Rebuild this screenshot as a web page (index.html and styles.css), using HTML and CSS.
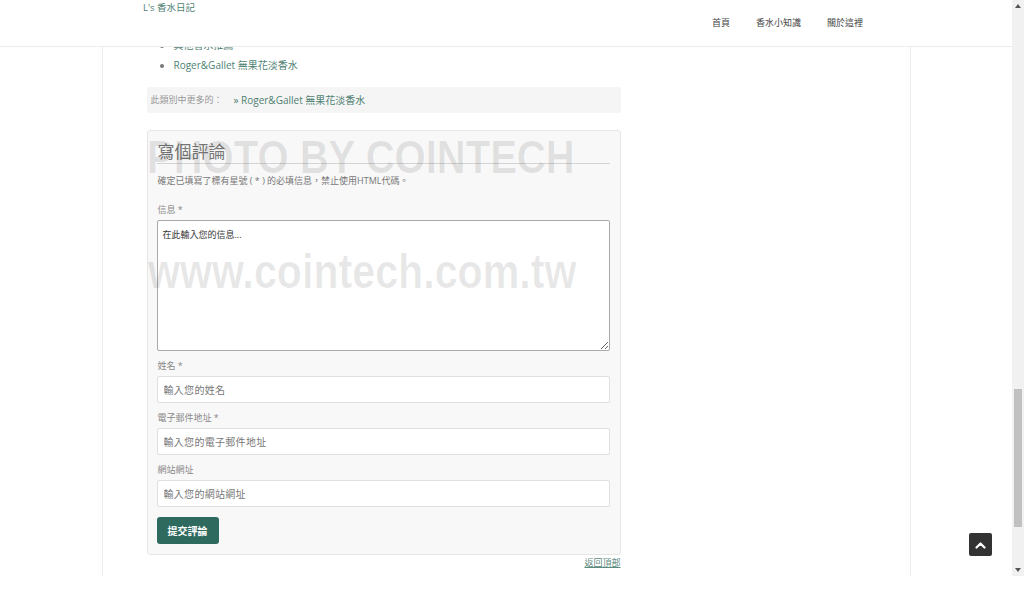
FILE: index.html
```html
<!DOCTYPE html>
<html lang="zh-Hant">
<head>
<meta charset="utf-8">
<title>L's 香水日記</title>
<link rel="stylesheet" href="styles.css">
</head>
<body>
<div class="viewport">
  <div class="page">
    <div class="container">
      <main class="main">
        <ul class="related">
          <li><a href="#">其他香水推薦</a></li>
          <li><a href="#">Roger&amp;Gallet 無果花淡香水</a></li>
        </ul>
        <div class="more">
          <span class="more-label">此類別中更多的：</span>
          <a href="#">» Roger&amp;Gallet 無果花淡香水</a>
        </div>
        <form class="comment-box">
          <h3 class="comment-title">寫個評論</h3>
          <p class="comment-note">確定已填寫了標有星號 ( * ) 的必填信息，禁止使用HTML代碼。</p>
          <div class="field field-first">
            <label>信息 *</label>
            <textarea class="textarea" placeholder="在此輸入您的信息..."></textarea>
          </div>
          <div class="field">
            <label>姓名 *</label>
            <input class="input" type="text" placeholder="輸入您的姓名">
          </div>
          <div class="field">
            <label>電子郵件地址 *</label>
            <input class="input" type="text" placeholder="輸入您的電子郵件地址">
          </div>
          <div class="field">
            <label>網站網址</label>
            <input class="input" type="text" placeholder="輸入您的網站網址">
          </div>
          <button class="submit" type="button">提交評論</button>
        </form>
        <div class="backtop-row"><a href="#">返回頂部</a></div>
      </main>
    </div>

    <header class="topbar">
      <div class="topbar-inner">
        <a class="logo" href="#">L's 香水日記</a>
        <nav class="nav">
          <a href="#">首頁</a>
          <a href="#">香水小知識</a>
          <a href="#">關於這裡</a>
        </nav>
      </div>
    </header>

    <div class="wm wm-1">PHOTO BY COINTECH</div>
    <div class="wm wm-2">www.cointech.com.tw</div>

    <a class="totop" href="#">
      <svg width="11" height="8" viewBox="0 0 11 8"><polyline points="1.5,6.5 5.5,2.5 9.5,6.5" fill="none" stroke="#fff" stroke-width="2.2" stroke-linecap="round" stroke-linejoin="round"/></svg>
    </a>
  </div>
  <div class="scrollbar">
    <span class="sb-up"></span>
    <span class="sb-thumb"></span>
    <span class="sb-down"></span>
  </div>
</div>
</body>
</html>
```
FILE: styles.css
```css
body {
  margin: 0;
  background: #fff;
  font-family: "Open Sans", "Noto Sans CJK TC", sans-serif;
  color: #555;
}

a { text-decoration: none; }

.viewport {
  display: flex;
  height: 576px;
  overflow: hidden;
}

.page {
  flex: 1;
  position: relative;
}

.container {
  width: 809px;
  height: 576px;
  box-sizing: border-box;
  margin: 0 auto;
  border-left: 1px solid #ececec;
  border-right: 1px solid #ececec;
  padding: 35px 44px 0;
}

.main {
  width: 474px;
}

/* related list */
.related {
  margin: 0;
  padding-left: 27px;
  font-size: 10px;
  line-height: 20px;
  color: #777;
}
.related a { color: #4e7f72; }

.more {
  margin-top: 12px;
  height: 26px;
  line-height: 26px;
  background: #f5f5f5;
  padding-left: 4px;
  display: flex;
  font-size: 9px;
  color: #999;
}
.more-label { width: 83px; }
.more a { color: #4e7f72; font-size: 10px; }

/* comment form */
.comment-box {
  margin: 17px 0 0;
  border: 1px solid #e6e6e6;
  border-radius: 3px;
  background: #f8f8f8;
  padding: 0 10px 10px 9px;
}

.comment-title {
  margin: 0;
  padding: 10px 0 0 1px;
  font-size: 17px;
  line-height: 22px;
  font-weight: normal;
  color: #777;
  border-bottom: 1px solid #d4d4d4;
}

.comment-note {
  margin: 11px 0 0;
  padding-left: 1px;
  font-size: 9px;
  line-height: 12px;
  color: #777;
}

.field { margin-top: 9px; }
.field-first { margin-top: 17px; }

.field label {
  display: block;
  padding-left: 1px;
  margin-bottom: 4px;
  font-size: 9px;
  line-height: 12px;
  color: #888;
}

.textarea {
  display: block;
  width: 100%;
  height: 131px;
  box-sizing: border-box;
  margin: 0;
  border: 1px solid #a9a9a9;
  border-radius: 2px;
  background: #fff;
  padding: 8px 5px;
  font-family: "Open Sans", "Noto Sans CJK TC", sans-serif;
  font-size: 9px;
  line-height: 11px;
  color: #333;
  resize: vertical;
}
.textarea::placeholder { color: #333; opacity: 1; }

.input {
  display: block;
  width: 100%;
  height: 27px;
  box-sizing: border-box;
  margin: 0;
  border: 1px solid #e0e0e0;
  border-radius: 2px;
  background: #fff;
  padding: 0 6px;
  font-family: "Open Sans", "Noto Sans CJK TC", sans-serif;
  font-size: 10px;
  letter-spacing: 0.3px;
  color: #333;
}
.input::placeholder { color: #777; opacity: 1; }

.submit {
  display: block;
  margin-top: 10px;
  height: 27px;
  padding: 0 11px;
  border: 0;
  border-radius: 3px;
  background: #2e6a5e;
  color: #fff;
  font-family: "Open Sans", "Noto Sans CJK TC", sans-serif;
  font-size: 10px;
  font-weight: bold;
}

.backtop-row {
  margin-top: 1px;
  text-align: right;
  font-size: 9px;
  line-height: 14px;
}
.backtop-row a {
  color: #5b8a7e;
  text-decoration: underline;
}

/* fixed header (overlays scrolled content) */
.topbar {
  position: absolute;
  top: 0;
  left: 0;
  right: 0;
  height: 47px;
  box-sizing: border-box;
  background: #fff;
  border-bottom: 1px solid #ececec;
}

.topbar-inner {
  width: 730px;
  margin: 0 auto;
  display: flex;
  justify-content: space-between;
  align-items: flex-start;
}

.logo {
  padding-left: 2px;
  font-size: 9.5px;
  line-height: 16px;
  color: #4e7f72;
}

.nav {
  display: flex;
  gap: 26px;
  padding: 16px 8px 0 0;
  font-size: 9px;
  line-height: 14px;
}
.nav a { color: #444; }

/* watermark overlay */
.wm {
  position: absolute;
  font-family: "Liberation Sans", Arial, sans-serif;
  font-weight: bold;
  line-height: 1;
  white-space: nowrap;
  color: rgba(0, 0, 0, 0.09);
  transform-origin: left top;
  pointer-events: none;
}
.wm-1 {
  top: 134px;
  left: 147px;
  font-size: 46px;
  transform: scaleX(0.87);
}
.wm-2 {
  top: 247px;
  left: 148px;
  font-size: 49px;
  transform: scaleX(0.84);
}

/* back to top button */
.totop {
  position: absolute;
  right: 20px;
  bottom: 20px;
  width: 23px;
  height: 23px;
  border-radius: 2px;
  background: #333;
  display: flex;
  align-items: center;
  justify-content: center;
}

/* fake scrollbar */
.scrollbar {
  width: 12px;
  background: #f1f1f1;
  position: relative;
}
.sb-up, .sb-down {
  position: absolute;
  left: 3px;
  width: 0;
  height: 0;
  border-left: 3px solid transparent;
  border-right: 3px solid transparent;
}
.sb-up {
  top: 4px;
  border-bottom: 4px solid #555;
}
.sb-down {
  bottom: 4px;
  border-top: 4px solid #555;
}
.sb-thumb {
  position: absolute;
  left: 2px;
  right: 2px;
  top: 389px;
  height: 138px;
  background: #c1c1c1;
}
```
